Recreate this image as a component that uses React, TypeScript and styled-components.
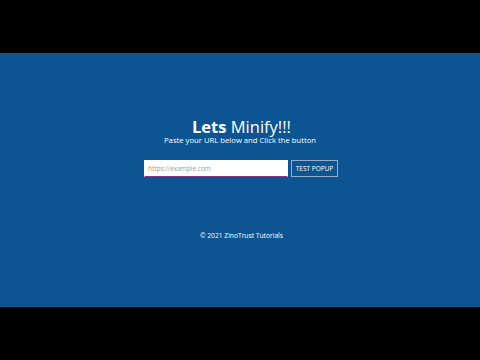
import React from "react";
import styled, { createGlobalStyle } from "styled-components";

const GlobalStyle = createGlobalStyle`
  html, body {
    margin: 0;
    padding: 0;
    background: #000;
    font-family: "Open Sans", "Liberation Sans", sans-serif;
  }
  * {
    box-sizing: border-box;
  }
`;

const Screen = styled.div`
  width: 480px;
  height: 360px;
  background: #000;
  padding-top: 53px;
`;

const Hero = styled.section`
  height: 254px;
  background: #0c5492;
  color: #ffffff;
  display: flex;
  flex-direction: column;
  align-items: center;
  padding-top: 65px;
`;

const Title = styled.h1`
  margin: 0;
  font-size: 16.5px;
  line-height: 18px;
  font-weight: 400;
  padding-left: 3px;

  b {
    font-weight: 700;
  }
`;

const Subtitle = styled.p`
  margin: 0;
  font-size: 7.7px;
  line-height: 8px;
`;

const Form = styled.form`
  display: flex;
  gap: 3px;
  margin-top: 16px;
  padding-left: 2px;
`;

const UrlInput = styled.input`
  width: 144px;
  height: 17px;
  padding: 0 3px;
  border: 1px solid #ffffff;
  border-bottom-color: #7a3c7e;
  background: #ffffff;
  font-family: "Open Sans", "Liberation Sans", sans-serif;
  font-size: 6.5px;
  outline: none;

  &::placeholder {
    color: #9a9a9a;
  }
`;

const Button = styled.button`
  width: 47px;
  height: 17px;
  padding: 0;
  border: 1px solid #8fb0d0;
  background: transparent;
  color: #ffffff;
  font-family: "Open Sans", "Liberation Sans", sans-serif;
  font-size: 6.5px;
  text-transform: uppercase;
`;

const Footer = styled.footer`
  margin-top: 54px;
  font-size: 6.7px;
  line-height: 9px;
  padding-left: 3px;
`;

export default function App() {
  return (
    <>
      <GlobalStyle />
      <Screen>
        <Hero>
          <Title>
            <b>Lets</b> Minify!!!
          </Title>
          <Subtitle>Paste your URL below and Click the button</Subtitle>
          <Form onSubmit={(e) => e.preventDefault()}>
            <UrlInput type="text" placeholder="https://example.com" />
            <Button type="submit">Test Popup</Button>
          </Form>
          <Footer>© 2021 ZinoTrust Tutorials</Footer>
        </Hero>
      </Screen>
    </>
  );
}
